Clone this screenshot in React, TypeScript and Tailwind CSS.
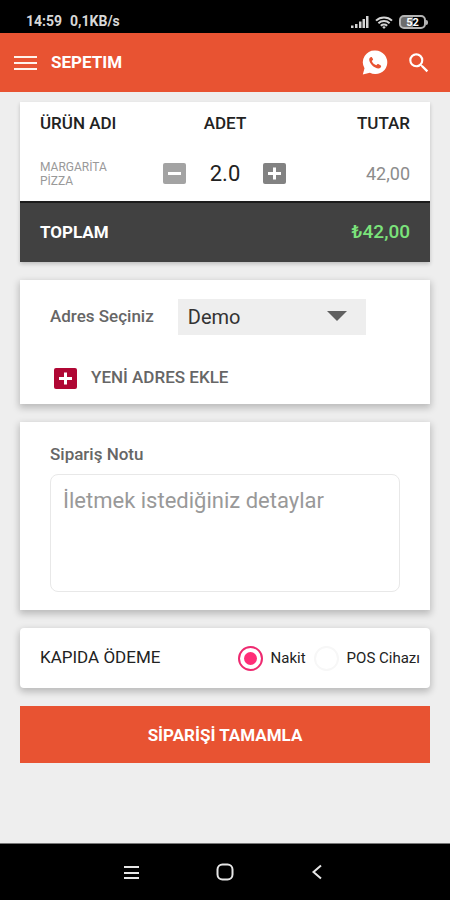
import { useState, type ReactNode } from "react";
import { MdSearch } from "react-icons/md";

function SignalIcon() {
  return (
    <svg width="18" height="12" viewBox="0 0 18 12" fill="#d4d4d4" aria-hidden="true">
      <rect x="0" y="9.5" width="2.5" height="2.5" />
      <rect x="4" y="8" width="2.5" height="4" />
      <rect x="8" y="5.5" width="2.5" height="6.5" />
      <rect x="11.5" y="3" width="2.5" height="9" />
      <rect x="15" y="0" width="2.5" height="12" />
    </svg>
  );
}

function WifiIcon() {
  return (
    <svg width="18" height="13" viewBox="0 0 18 13" fill="none" stroke="#d4d4d4" strokeWidth="2" aria-hidden="true">
      <path d="M1 4.600a11.600 11.600 0 0 1 16 0" />
      <path d="M3.400 7.200a8.200 8.200 0 0 1 11.200 0" />
      <path d="M5.800 9.800a4.800 4.800 0 0 1 6.400 0" />
      <path d="M7.200 11 9 13l1.800-2A2.800 2.800 0 0 0 7.200 11z" fill="#d4d4d4" stroke="none" />
    </svg>
  );
}

function Battery() {
  return (
    <span className="flex items-center">
      <span className="flex h-[14px] w-[27px] items-center justify-center rounded-[5px] border-2 border-[#b4b4b4] bg-linear-to-r from-[#6c6c6c] from-50% to-black to-50% text-[11px] leading-none font-bold text-white">
        52
      </span>
      <span className="h-[5px] w-[2px] rounded-r-sm bg-[#b4b4b4]" />
    </span>
  );
}

function WhatsAppIcon() {
  return (
    <svg width="26" height="25" viewBox="0 0 26 25" aria-hidden="true">
      <path
        d="M13.400 .5a11.800 11.800 0 1 1-5.500 22.200L.8 24.500l1.700-6.300A11.800 11.800 0 0 1 13.400.5z"
        fill="#fff"
      />
      <path
        d="M9.200 6.900c-.8.100-2 1.100-2 2.600 0 4 5.200 8.900 9.300 8.900 1.500 0 2.500-1.100 2.600-2 .1-.5 0-.8-.3-1l-2.500-1.400c-.4-.2-.7-.1-1 .2l-1 1.100c-2-.7-3.700-2.300-4.500-4.300l1-1c.3-.3.4-.6.200-1L9.900 7.300c-.2-.3-.4-.4-.7-.4z"
        fill="#e85332"
      />
    </svg>
  );
}

function SquareIcon({ color, plus }: { color: string; plus: boolean }) {
  return (
    <svg width="23" height="21" viewBox="0 0 23 21" aria-hidden="true">
      <rect width="23" height="21" rx="2" fill={color} />
      <path d={plus ? "M5 10.500h13M11.500 4.500v12" : "M5 10.500h13"} stroke="#fff" strokeWidth="3" />
    </svg>
  );
}

function Card({ children, className }: { children: ReactNode; className: string }) {
  return (
    <section className={`bg-white shadow-[0_3px_7px_1px_rgba(0,0,0,0.22)] ${className}`}>{children}</section>
  );
}

const payments = [
  { id: "nakit", label: "Nakit" },
  { id: "pos", label: "POS Cihazı" },
];

export default function App() {
  const [count, setCount] = useState(2);
  const [payment, setPayment] = useState("nakit");
  const total = (count * 21).toFixed(2).replace(".", ",");

  return (
    <div
      lang="tr"
      className="flex min-h-screen flex-col bg-[#eeeeee] font-[Roboto,'Noto_Sans',sans-serif] text-[#222222]"
    >
      <div className="flex h-[33px] items-end justify-between bg-black pr-[22px] pb-1 pl-[26px] text-[14px] leading-4 font-bold text-[#d8d8d8]">
        <span className="flex gap-2">
          <span>14:59</span>
          <span>0,1KB/s</span>
        </span>
        <span className="flex items-center gap-[6px]">
          <SignalIcon />
          <WifiIcon />
          <Battery />
        </span>
      </div>

      <header className="flex h-[59px] items-center bg-[#e85332] px-[14px] text-white">
        <button type="button" aria-label="Menü">
          <svg width="23" height="16" viewBox="0 0 23 16" stroke="#fff3ec" strokeWidth="2" aria-hidden="true">
            <path d="M0 2h23M0 8h23M0 14h23" />
          </svg>
        </button>
        <h1 className="ml-[14px] flex-1 text-[17px] font-bold">SEPETIM</h1>
        <button type="button" aria-label="WhatsApp">
          <WhatsAppIcon />
        </button>
        <button type="button" aria-label="Ara" className="mr-1 ml-[18px]">
          <MdSearch size={26} />
        </button>
      </header>

      <main className="flex flex-1 flex-col gap-[18px] px-5 pt-[10px] pb-6">
        <table className="w-full table-fixed bg-white shadow-[0_2px_4px_rgba(0,0,0,0.2)]">
          <thead>
            <tr className="h-11 text-[17px] font-medium">
              <th scope="col" className="pl-5 text-left font-medium">ÜRÜN ADI</th>
              <th scope="col" className="text-center font-medium">ADET</th>
              <th scope="col" className="pr-5 text-right font-medium">TUTAR</th>
            </tr>
          </thead>
          <tbody>
            <tr className="h-14">
              <td className="pl-5 text-[12px] leading-[14px] text-[#999999]">
                <span className="block w-20">MARGARİTA PİZZA</span>
              </td>
              <td>
                <div className="flex items-center justify-center">
                  <button type="button" aria-label="Azalt" onClick={() => setCount(Math.max(1, count - 1))}>
                    <SquareIcon color="#a3a3a3" plus={false} />
                  </button>
                  <span className="w-[77px] text-center text-[22px] leading-7">{count.toFixed(1)}</span>
                  <button type="button" aria-label="Artır" onClick={() => setCount(count + 1)}>
                    <SquareIcon color="#828282" plus />
                  </button>
                </div>
              </td>
              <td className="pr-5 text-right text-[18px] text-[#8c8c8c]">{total}</td>
            </tr>
          </tbody>
          <tfoot>
            <tr className="h-[60px] border-t-2 border-[#1c1c1c] bg-[#414141]">
              <th scope="row" className="pl-5 text-left text-[17px] font-bold text-white">TOPLAM</th>
              <td />
              <td className="pr-5 text-right text-[19px] font-medium text-[#7be37b]">₺{total}</td>
            </tr>
          </tfoot>
        </table>

        <Card className="px-[30px] pt-[19px] pb-4">
          <div className="flex items-center gap-6">
            <label htmlFor="adres" className="text-[17px] font-medium text-[#666666]">
              Adres Seçiniz
            </label>
            <div className="relative w-[188px]">
              <select
                id="adres"
                className="h-9 w-full appearance-none bg-[#eeeeee] pl-[10px] text-[20px] text-[#333333]"
              >
                <option>Demo</option>
              </select>
              <svg
                width="20"
                height="10"
                viewBox="0 0 20 10"
                fill="#606060"
                className="pointer-events-none absolute top-3 right-[19px]"
                aria-hidden="true"
              >
                <path d="M0 0h20L10 10z" />
              </svg>
            </div>
          </div>
          <button
            type="button"
            className="mt-[33px] flex h-5 items-center gap-[14px] pl-1 text-[17px] font-medium text-[#666666]"
          >
            <SquareIcon color="#b00734" plus />
            YENİ ADRES EKLE
          </button>
        </Card>

        <Card className="flex flex-col px-[30px] pt-5 pb-[18px]">
          <label htmlFor="not" className="text-[17px] leading-6 font-medium text-[#666666]">
            Sipariş Notu
          </label>
          <textarea
            id="not"
            placeholder="İletmek istediğiniz detaylar"
            className="mt-2 h-[118px] resize-none rounded-lg border border-[#e8e8e8] px-3 py-[12px] text-[22px] leading-7 placeholder:text-[#999999]"
          />
        </Card>

        <Card className="flex h-[60px] items-center rounded-sm pr-[10px] pl-5">
          <fieldset className="flex flex-1 items-center">
            <legend className="float-left flex-1 text-[17px]">KAPIDA ÖDEME</legend>
            <div className="flex flex-1 items-center justify-end gap-2">
              {payments.map((p) => (
                <label key={p.id} className="flex items-center gap-2 text-[15px] whitespace-nowrap">
                  <input
                    type="radio"
                    name="odeme"
                    checked={payment === p.id}
                    onChange={() => setPayment(p.id)}
                    className="size-[25px] shrink-0 appearance-none rounded-full border-2 border-[#f7f7f7] checked:border-[#ee2a70] checked:bg-[#ff2d78] checked:bg-clip-content checked:p-1"
                  />
                  {p.label}
                </label>
              ))}
            </div>
          </fieldset>
        </Card>

        <button type="button" className="h-[57px] bg-[#e85332] pt-[2px] text-[17px] font-bold text-white">
          SİPARİŞİ TAMAMLA
        </button>
      </main>

      <nav className="flex h-[57px] items-center justify-center gap-[76px] border-t border-[#777777] bg-black">
        <button type="button" aria-label="Son uygulamalar">
          <svg width="16" height="15" viewBox="0 0 16 15" stroke="#e6e6e6" strokeWidth="2" aria-hidden="true">
            <path d="M0 2h15M0 8h15M0 13h15" />
          </svg>
        </button>
        <button type="button" aria-label="Ana ekran">
          <svg width="18" height="18" viewBox="0 0 18 18" fill="none" stroke="#e6e6e6" strokeWidth="2" aria-hidden="true">
            <rect x="1.500" y="1.500" width="15" height="15" rx="5" />
          </svg>
        </button>
        <button type="button" aria-label="Geri">
          <svg width="16" height="16" viewBox="0 0 16 16" fill="none" stroke="#e6e6e6" strokeWidth="2" aria-hidden="true">
            <path d="M11 1.500 3.500 8l7.500 6.500" />
          </svg>
        </button>
      </nav>
    </div>
  );
}
